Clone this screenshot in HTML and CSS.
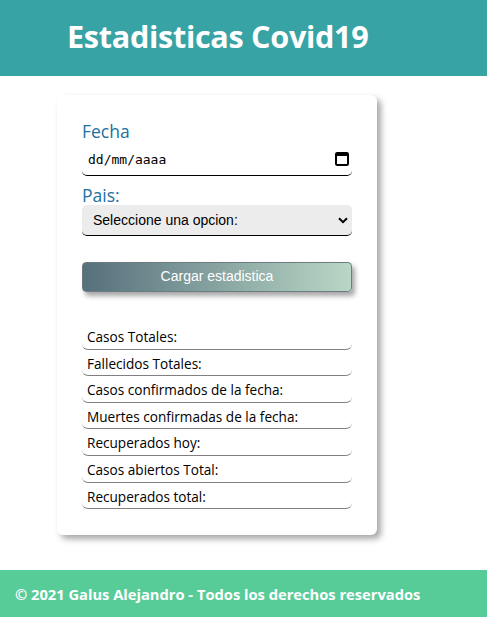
FILE: index.html
```html
<!DOCTYPE html>
<html lang="es">
<head>
<meta charset="utf-8">
<title>Estadisticas Covid19</title>
<link rel="stylesheet" href="styles.css">
</head>
<body>
<header class="header">
  <h1 class="title">Estadisticas Covid19</h1>
</header>
<main class="main">
  <section class="card">
    <label class="label" for="fecha">Fecha</label>
    <div class="date-input">
      <span class="date-text">dd/mm/aaaa</span>
      <svg class="cal" width="14" height="15" viewBox="0 0 14 15"><rect x="1" y="2" width="12" height="12" rx="1.2" fill="none" stroke="#000" stroke-width="2"/><rect x="1" y="2" width="12" height="3" fill="#000"/></svg>
    </div>
    <label class="label label-pais" for="pais">Pais:</label>
    <div class="select">
      <span>Seleccione una opcion:</span>
      <svg width="10" height="7" viewBox="0 0 10 7"><path d="M1 1.2 L5 5.2 L9 1.2" fill="none" stroke="#000" stroke-width="2"/></svg>
    </div>
    <button class="btn">Cargar estadistica</button>
    <ul class="results">
      <li class="row">Casos Totales:</li>
      <li class="row">Fallecidos Totales:</li>
      <li class="row">Casos confirmados de la fecha:</li>
      <li class="row">Muertes confirmadas de la fecha:</li>
      <li class="row">Recuperados hoy:</li>
      <li class="row">Casos abiertos Total:</li>
      <li class="row">Recuperados total:</li>
    </ul>
  </section>
</main>
<footer class="footer">© 2021 Galus Alejandro - Todos los derechos reservados</footer>
</body>
</html>
```
FILE: styles.css
```css
* { box-sizing: border-box; }
body {
  margin: 0;
  font-family: "Open Sans", "Noto Sans", sans-serif;
  background: #fff;
}
.header {
  background: #38a3a5;
  height: 76px;
  display: flex;
  align-items: center;
  padding-left: 67px;
}
.title {
  margin: 0;
  color: #fff;
  font-size: 30.6px;
  font-weight: 700;
  letter-spacing: -0.3px;
  padding-bottom: 4px;
}
.main {
  padding: 19px 0 35px 57px;
}
.card {
  width: 320px;
  height: 440px;
  background: #fff;
  border-radius: 6px;
  box-shadow: 4px 4px 6px rgba(0,0,0,0.35);
  padding: 23px 25px 0 25px;
  display: flex;
  flex-direction: column;
}
.label {
  color: #22709e;
  font-size: 17.5px;
  font-weight: 400;
  line-height: 26px;
  height: 26px;
}
.date-input {
  height: 32px;
  border-bottom: 1.5px solid #000;
  border-radius: 0 0 5px 5px;
  display: flex;
  align-items: center;
  justify-content: space-between;
  padding: 0 3px 0 6px;
  margin-bottom: 9px;
}
.date-text {
  font-family: "DejaVu Sans Mono", "Liberation Mono", monospace;
  font-size: 13px;
  letter-spacing: 0;
  color: #000;
}
.cal { margin-bottom: 2px; }
.label-pais { height: 20px; line-height: 20px; }
.select {
  height: 31px;
  background: #ececec;
  border-radius: 5px;
  border-bottom: 1.5px solid #000;
  display: flex;
  align-items: center;
  justify-content: space-between;
  padding: 0 4px 0 11px;
  font-family: "Liberation Sans", Arial, sans-serif;
  font-size: 14px;
  color: #000;
}
.btn {
  margin-top: 26px;
  height: 30px;
  border: 1px solid #6c7c80;
  border-radius: 4px;
  background: linear-gradient(90deg, #56707c 0%, #b9d7c6 100%);
  color: #fff;
  font-family: "Liberation Sans", Arial, sans-serif;
  font-size: 14px;
  box-shadow: 3px 4px 5px rgba(0,0,0,0.35);
  padding: 0 0 2px;
}
.results {
  list-style: none;
  margin: 31px 0 0;
  padding: 0;
}
.row {
  height: 26.6px;
  line-height: 27px;
  font-size: 13.6px;
  color: #000;
  padding-left: 5px;
  border-bottom: 1px solid #808080;
  border-radius: 0 0 6px 6px;
}
.footer {
  background: #57cc99;
  height: 47px;
  color: #fff;
  font-weight: 700;
  font-size: 14.7px;
  padding-left: 15px;
  display: flex;
  align-items: center;
}
```
